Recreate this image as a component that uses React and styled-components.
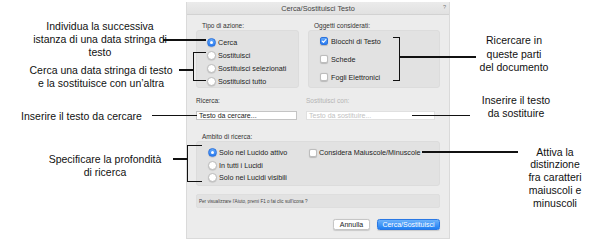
import React from 'react';
import styled, { createGlobalStyle } from 'styled-components';

const Global = createGlobalStyle`
  body {
    margin: 0;
    background: #ffffff;
    font-family: "Liberation Sans", Arial, sans-serif;
  }
`;

const Canvas = styled.div`
  position: relative;
  width: 597px;
  height: 252px;
  overflow: hidden;
  padding-top: 2px;
  box-sizing: border-box;
`;

const Dialog = styled.div`
  margin-left: 186px;
  width: 264px;
  height: 237px;
  box-sizing: border-box;
  background: #ececec;
  border: 1px solid #dadada;
  border-top: none;
  display: flex;
  flex-direction: column;
  color: #222;
`;

const TitleBar = styled.div`
  position: relative;
  height: 12px;
  flex: none;
  background: linear-gradient(#ebebeb, #e1e1e1);
  border-bottom: 1px solid #d2d2d2;
  display: flex;
  align-items: center;
  justify-content: center;
  font-size: 7.3px;
  color: #444;
`;

const Help = styled.span`
  position: absolute;
  right: 3px;
  top: 2px;
  font-size: 5.5px;
  color: #777;
`;

const Body = styled.div`
  padding: 0 9px;
  display: flex;
  flex-direction: column;
`;

const Row = styled.div`
  display: flex;
  gap: 9px;
  margin-top: ${(p) => p.$mt || 0}px;
`;

const Column = styled.div`
  width: ${(p) => p.$w}px;
  display: flex;
  flex-direction: column;
`;

const Caption = styled.div`
  font-size: 6.5px;
  line-height: 8px;
  height: 8px;
  padding-left: ${(p) => p.$indent || 0}px;
  color: ${(p) => (p.$disabled ? '#b4b4b4' : '#333')};
  white-space: nowrap;
`;

const Group = styled.div`
  height: ${(p) => p.$h}px;
  box-sizing: border-box;
  background: #e2e2e2;
  border: 0.5px solid #dcdcdc;
  border-radius: 3px;
  padding: ${(p) => p.$pt}px 0 0 ${(p) => p.$pl}px;
  display: ${(p) => (p.$split ? 'flex' : 'block')};
`;

const Stack = styled.div`
  width: ${(p) => (p.$w ? `${p.$w}px` : 'auto')};
  display: flex;
  flex-direction: column;
`;

const Option = styled.label`
  height: ${(p) => p.$h}px;
  display: flex;
  align-items: center;
  gap: ${(p) => p.$gap || 2}px;
  font-size: 7.2px;
  color: #222;
  white-space: nowrap;
`;

const Radio = styled.span`
  flex: none;
  width: 9px;
  height: 9px;
  box-sizing: border-box;
  border-radius: 50%;
  background: ${(p) => (p.$on ? 'linear-gradient(#62a8fa, #2b7cf1)' : '#ffffff')};
  border: 0.5px solid ${(p) => (p.$on ? '#2c72dc' : '#bdbdbd')};
  box-shadow: 0 0.5px 1px rgba(0, 0, 0, 0.18);
  display: flex;
  align-items: center;
  justify-content: center;

  &::after {
    content: '';
    display: ${(p) => (p.$on ? 'block' : 'none')};
    width: 3px;
    height: 3px;
    border-radius: 50%;
    background: #ffffff;
  }
`;

const Check = styled.span`
  flex: none;
  width: 8px;
  height: 8px;
  box-sizing: border-box;
  border-radius: 2px;
  background: ${(p) => (p.$on ? 'linear-gradient(#62a8fa, #2b7cf1)' : '#ffffff')};
  border: 0.5px solid ${(p) => (p.$on ? '#2c72dc' : '#bdbdbd')};
  box-shadow: 0 0.5px 1px rgba(0, 0, 0, 0.18);
  display: flex;
  align-items: center;
  justify-content: center;
`;

const Input = styled.div`
  height: 9px;
  box-sizing: border-box;
  background: #ffffff;
  border: 0.5px solid ${(p) => (p.$disabled ? '#e0e0e0' : '#c4c4c4')};
  font-size: 7px;
  line-height: 8px;
  padding-left: 2px;
  color: ${(p) => (p.$disabled ? '#c2c2c2' : '#222')};
  white-space: nowrap;
  margin-top: 6px;
`;

const HelpBar = styled.div`
  margin-top: 8px;
  height: 14px;
  border-radius: 2px;
  background: #e2e2e2;
  border: 0.5px solid #dedede;
  box-sizing: border-box;
  display: flex;
  align-items: center;
  padding-left: 2px;
  font-size: 4.6px;
  color: #444;
  white-space: nowrap;
`;

const Buttons = styled.div`
  margin-top: 11px;
  display: flex;
  justify-content: flex-end;
  gap: 7px;
`;

const Button = styled.div`
  width: ${(p) => p.$w}px;
  height: 11px;
  box-sizing: border-box;
  border-radius: 2.5px;
  display: flex;
  align-items: center;
  justify-content: center;
  font-size: 7px;
  white-space: nowrap;
  color: ${(p) => (p.$primary ? '#ffffff' : '#222')};
  background: ${(p) => (p.$primary ? 'linear-gradient(#6cb2fb, #1f7ff3)' : '#ffffff')};
  border: 0.5px solid ${(p) => (p.$primary ? '#2a78e4' : '#c6c6c6')};
  box-shadow: 0 0.5px 1px rgba(0, 0, 0, 0.15);
`;

/* callouts drawn over the screenshot */
const Note = styled.div`
  position: absolute;
  top: ${(p) => p.$top}px;
  left: ${(p) => p.$x}px;
  transform: translateX(-50%);
  font-size: 10.5px;
  line-height: ${(p) => p.$lh || 13}px;
  color: #111;
  text-align: center;
  white-space: nowrap;
`;

const Leader = styled.div`
  position: absolute;
  top: ${(p) => p.$y - 0.75}px;
  left: ${(p) => p.$x}px;
  width: ${(p) => p.$w}px;
  height: 1.5px;
  background: #111;
`;

const Bracket = styled.div`
  position: absolute;
  top: ${(p) => p.$y}px;
  left: ${(p) => p.$x}px;
  width: ${(p) => p.$w}px;
  height: ${(p) => p.$h}px;
  box-sizing: border-box;
  border: 1.5px solid #111;
  ${(p) => (p.$right ? 'border-left: none;' : 'border-right: none;')}
`;

const Tick = () => (
  <svg width="6" height="6" viewBox="0 0 6 6">
    <path d="M1.2 3.1 L2.5 4.4 L4.9 1.5" fill="none" stroke="#fff" strokeWidth="1.1" strokeLinecap="round" strokeLinejoin="round" />
  </svg>
);

export default function App() {
  return (
    <Canvas>
      <Global />
      <Dialog>
        <TitleBar>
          Cerca/Sostituisci Testo
          <Help>?</Help>
        </TitleBar>
        <Body>
          <Row $mt={7}>
            <Column $w={103}>
              <Caption $indent={6}>Tipo di azione:</Caption>
              <Group $h={58} $pt={4.5} $pl={10}>
                <Option $h={13}><Radio $on />Cerca</Option>
                <Option $h={13}><Radio />Sostituisci</Option>
                <Option $h={13}><Radio />Sostituisci selezionati</Option>
                <Option $h={13}><Radio />Sostituisci tutto</Option>
              </Group>
            </Column>
            <Column $w={132}>
              <Caption $indent={6}>Oggetti considerati:</Caption>
              <Group $h={58} $pt={1} $pl={11}>
                <Option $h={18} $gap={3}><Check $on><Tick /></Check>Blocchi di Testo</Option>
                <Option $h={18} $gap={3}><Check />Schede</Option>
                <Option $h={18} $gap={3}><Check />Fogli Elettronici</Option>
              </Group>
            </Column>
          </Row>

          <Row $mt={9}>
            <Column $w={101}>
              <Caption>Ricerca:</Caption>
              <Input>Testo da cercare...</Input>
            </Column>
            <Column $w={129}>
              <Caption $disabled>Sostituisci con:</Caption>
              <Input $disabled>Testo da sostituire...</Input>
            </Column>
          </Row>

          <Caption $indent={6} style={{ marginTop: 13 }}>Ambito di ricerca:</Caption>
          <Group $h={45} $pt={4.5} $pl={11} $split>
            <Stack $w={101}>
              <Option $h={12.5}><Radio $on />Solo nel Lucido attivo</Option>
              <Option $h={12.5}><Radio />In tutti i Lucidi</Option>
              <Option $h={12.5}><Radio />Solo nei Lucidi visibili</Option>
            </Stack>
            <Stack>
              <Option $h={12.5}><Check />Considera Maiuscole/Minuscole</Option>
            </Stack>
          </Group>

          <HelpBar>Per visualizzare l'Aiuto, premi F1 o fai clic sull'icona ?</HelpBar>

          <Buttons>
            <Button $w={37}>Annulla</Button>
            <Button $w={63} $primary>Cerca/Sostituisci</Button>
          </Buttons>
        </Body>
      </Dialog>

      <Note $x={100} $top={19.5}>
        Individua la successiva<br />istanza di una data stringa di<br />testo
      </Note>
      <Note $x={101} $top={63.5}>
        Cerca una data stringa di testo<br />e la sostituisce con un’altra
      </Note>
      <Note $x={81.5} $top={109.5}>Inserire il testo da cercare</Note>
      <Note $x={105} $top={152.5}>
        Specificare la profondità<br />di ricerca
      </Note>
      <Note $x={514} $top={34} $lh={13.5}>
        Ricercare in<br />queste parti<br />del documento
      </Note>
      <Note $x={516} $top={93.5}>
        Inserire il testo<br />da sostituire
      </Note>
      <Note $x={555} $top={145.5} $lh={12.8}>
        Attiva la<br />distinzione<br />fra caratteri<br />maiuscoli e<br />minuscoli
      </Note>

      <Leader $x={163} $y={40} $w={43} />
      <Leader $x={179} $y={70} $w={14} />
      <Bracket $x={193} $y={52} $w={13} $h={29} />
      <Leader $x={152} $y={115.5} $w={45} />
      <Leader $x={173} $y={159} $w={14} />
      <Bracket $x={187} $y={145} $w={15} $h={37} />
      <Bracket $x={393} $y={37} $w={7} $h={44} $right />
      <Leader $x={399} $y={57} $w={77} />
      <Leader $x={412} $y={115.5} $w={58} />
      <Leader $x={422} $y={152} $w={96} />
    </Canvas>
  );
}
